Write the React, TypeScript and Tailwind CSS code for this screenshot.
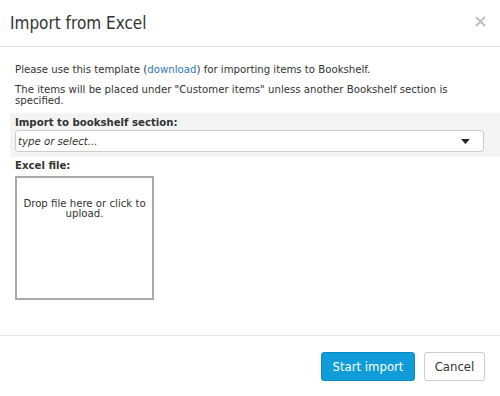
import { useState } from 'react'

const font = { fontFamily: '"DejaVu Sans Condensed", "DejaVu Sans", sans-serif' }

const ImportDialog = () => {
  const [section, setSection] = useState('')
  return (
    <div className="w-[500px] h-[396px] bg-white text-[#333]" style={font}>
      {/* header */}
      <header className="flex h-[47px] items-center justify-between border-b border-[#e5e5e5] pl-[10px] pr-[14px]">
        <h4 className="text-[17px] leading-none">Import from Excel</h4>
        <button className="text-[#c0c0c0] -mt-[3px]" aria-label="Close">
          <svg width="11" height="11" viewBox="0 0 11 11">
            <path d="M1 1L10 10M10 1L1 10" stroke="currentColor" strokeWidth="2.2" />
          </svg>
        </button>
      </header>
      {/* body */}
      <div className="flex h-[289px] flex-col border-b border-[#e5e5e5] px-[15px] pt-[17px] text-[11.3px] leading-[11px]">
        <p>
          Please use this template (<a className="text-[#2a7ab9]">download</a>) for importing items to
          Bookshelf.
        </p>
        <p className="mt-[9px]">
          The items will be placed under "Customer items" unless another Bookshelf section is specified.
        </p>
        <div className="-mr-[15px] ml-[-5px] mt-[7px] bg-[#f4f4f4] pb-[5px] pl-[5px] pr-[16px] pt-[4px]">
          <label className="block font-bold leading-[12px]">Import to bookshelf section:</label>
          <div className="mt-[1px] flex h-[22px] items-center justify-between rounded-[3px] border border-[#ccc] bg-white pl-[2px] pr-[13px]">
            <input
              value={section}
              onChange={(e) => setSection(e.target.value)}
              placeholder="type or select..."
              className="w-full bg-transparent text-[11.3px] italic outline-none placeholder:text-[#333]"
            />
            <svg width="9" height="5" viewBox="0 0 9 5">
              <path d="M0 0H9L4.5 5Z" fill="#222" />
            </svg>
          </div>
        </div>
        <label className="mt-[3px] block font-bold leading-[12px]">Excel file:</label>
        <div className="mt-[4px] h-[124px] w-[139px] border-2 border-[#aaa] bg-white px-[3px] pt-[21px] text-center leading-[10px]">
          Drop file here or click to upload.
        </div>
      </div>
      {/* footer */}
      <footer className="flex justify-end gap-[9px] pr-[15px] pt-[16px]">
        <button className="h-[29px] w-[94px] rounded-[3px] border border-[#0b8cc5] bg-[#0f9cd9] text-[13px] text-white">
          Start import
        </button>
        <button className="h-[29px] w-[61px] rounded-[3px] border border-[#ccc] bg-white text-[13px] text-[#333]">
          Cancel
        </button>
      </footer>
    </div>
  )
}

export default function App() {
  return <ImportDialog />
}
